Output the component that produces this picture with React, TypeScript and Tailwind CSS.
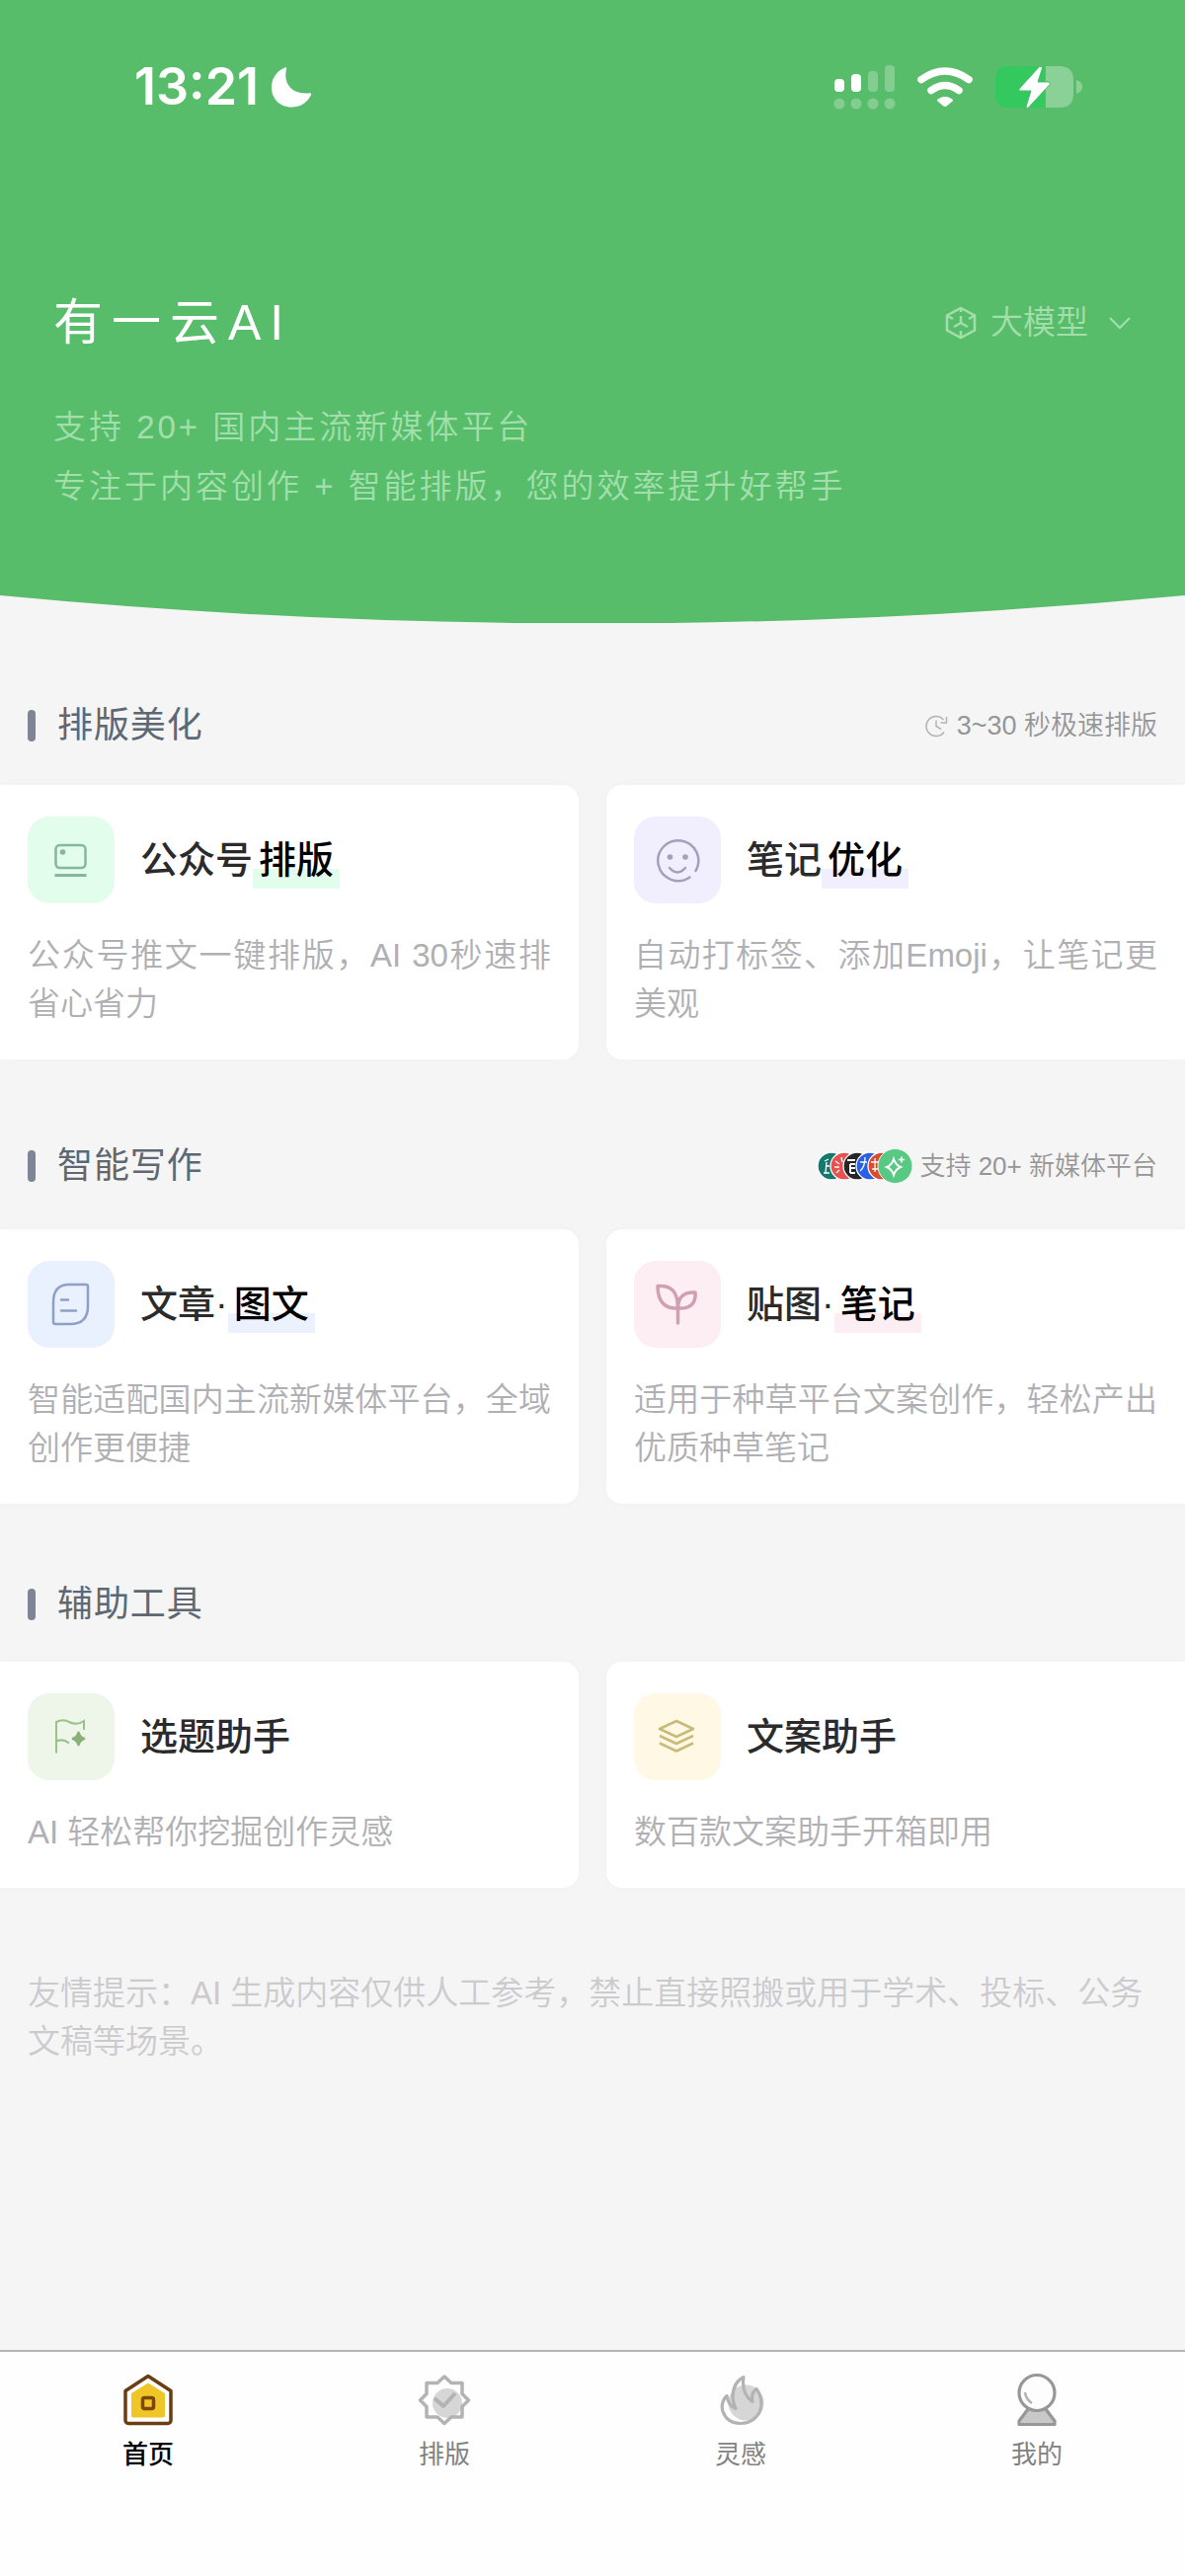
import type { ReactNode } from 'react';

interface Tool {
  title: string;
  mark?: string;
  description: string;
  tile: string;
  underline?: string;
  icon: ReactNode;
}

interface Section {
  title: string;
  headerHeight: string;
  note?: ReactNode;
  tools: Tool[];
}

const layoutIcon = (
  <svg viewBox="0 0 48 48" className="size-12" fill="none" stroke="#85b79b" strokeWidth="2.500">
    <rect x="8.500" y="9" width="30" height="23" rx="4" />
    <circle cx="15.500" cy="16" r="2.800" fill="#85b79b" stroke="none" />
    <path d="M7.500 39.500h32" strokeWidth="2.800" />
  </svg>
);

const smileIcon = (
  <svg viewBox="0 0 48 48" className="size-12" fill="none" stroke="#a79dbd" strokeWidth="2.500" strokeLinecap="round">
    <path d="M36.500 41.500A20.500 20.500 0 1 1 42.500 35" />
    <circle cx="16.500" cy="21" r="2.800" fill="#a79dbd" stroke="none" />
    <circle cx="32" cy="21" r="2.800" fill="#a79dbd" stroke="none" />
    <path d="M16 32q8 9 16 0" />
  </svg>
);

const articleIcon = (
  <svg viewBox="0 0 48 48" className="size-12" fill="none" stroke="#8fa0c8" strokeWidth="2.500" strokeLinecap="round">
    <path d="M22 4h17a2 2 0 0 1 2 2v20c0 12-6 18-18 18H8a2 2 0 0 1-2-2V22C6 10 11 4 22 4z" />
    <path d="M14 19.500h7M14 30.500h15" />
  </svg>
);

const sproutIcon = (
  <svg viewBox="0 0 48 48" className="size-12" fill="none" stroke="#d19fb2" strokeWidth="3.500" strokeLinecap="round" strokeLinejoin="round">
    <path d="M24.500 43V28" />
    <path d="M24.500 28C12 29 4 22 4 5.500c14-1 20.500 6 20.500 22.500z" />
    <path d="M24.500 28c0-11 6-17 17.500-16 1 11-5 17-17.500 16z" />
  </svg>
);

const flagIcon = (
  <svg viewBox="0 0 48 48" className="size-12" fill="none" stroke="#9cc08c" strokeWidth="2">
    <path d="M9 40.500V9q7-3.500 13 0 8 4 15-1V17M9 28.500q7-3 13 2" />
    <path d="M31.500 19q1.500 6 6.500 7-5 1-6.500 7-1.500-6-6.500-7 5-1 6.500-7z" fill="#8ab179" stroke="#8ab179" />
  </svg>
);

const layersIcon = (
  <svg viewBox="0 0 48 48" className="size-12" fill="none" stroke="#c8ba78" strokeWidth="2.500" strokeLinejoin="round">
    <path d="M23 8l17 8-17 8-17-8z" />
    <path d="M6 23l17 8 17-8M6 30.500l17 8 17-8" />
  </svg>
);

function PlatformLogos() {
  return (
    <svg viewBox="0 0 98 36" className="h-9 w-[98px]" fill="none">
      <g stroke="#ffffff" strokeWidth="1.300">
        <circle cx="15" cy="18" r="14" fill="#12796c" />
        <path d="M8 13l4-2M10 14l-1 11M7 25h6M9 18h4" />
        <circle cx="28" cy="18" r="14" fill="#e8514f" />
        <path d="M19 13l4 3M18 19h5M20 25l3-3M25 9l1 5" />
        <circle cx="41" cy="18" r="14" fill="#262626" />
        <path d="M31 12h8M34 16v9M34 16h5M34 20h5M34 25h5" strokeWidth="2" />
        <circle cx="54" cy="18" r="14" fill="#2a5fe8" />
        <path d="M44 14h7M49 9q0 10-5 14" />
        <circle cx="66" cy="18" r="14" fill="#dc4b2c" />
        <path d="M55 14h8M59 10v14M56 21h8" />
      </g>
      <circle cx="79.500" cy="18" r="17.500" fill="#57c983" stroke="#f5f5f6" strokeWidth="1" />
      <path d="M78 11q2 6 7 8-5 2-7 8-2-6-7-8 5-2 7-8z" stroke="#ffffff" strokeWidth="2" />
      <path d="M86 8.500v6M83 11.500h6" stroke="#ffffff" strokeWidth="1.500" />
    </svg>
  );
}

function SpeedNote() {
  return (
    <div className="flex items-center gap-2 text-[27px] font-[350] text-[#969696]">
      <svg viewBox="0 0 24 24" className="size-6" fill="none" stroke="#b4b4b4" strokeWidth="1.500">
        <path d="M19 18.500A10 10 0 1 1 18.500 6M21.500 3v6h-6M11 6.500v6l5 3" />
      </svg>
      <span>3~30 秒极速排版</span>
    </div>
  );
}

function PlatformNote() {
  return (
    <div className="flex items-center gap-1.5 text-[26px] font-[350] text-[#969696]">
      <PlatformLogos />
      <span>支持 20+ 新媒体平台</span>
    </div>
  );
}

const sections: Section[] = [
  {
    title: '排版美化',
    headerHeight: 'h-15',
    note: <SpeedNote />,
    tools: [
      {
        title: '公众号',
        mark: '排版',
        description: '公众号推文一键排版，AI 30秒速排省心省力',
        tile: 'bg-[#e3fdec]',
        underline: 'bg-[#e3fdec]',
        icon: layoutIcon,
      },
      {
        title: '笔记',
        mark: '优化',
        description: '自动打标签、添加Emoji，让笔记更美观',
        tile: 'bg-[#f1effe]',
        underline: 'bg-[#f1effe]',
        icon: smileIcon,
      },
    ],
  },
  {
    title: '智能写作',
    headerHeight: 'h-17',
    note: <PlatformNote />,
    tools: [
      {
        title: '文章·',
        mark: '图文',
        description: '智能适配国内主流新媒体平台，全域创作更便捷',
        tile: 'bg-[#e9f1fe]',
        underline: 'bg-[#ebf2fd]',
        icon: articleIcon,
      },
      {
        title: '贴图·',
        mark: '笔记',
        description: '适用于种草平台文案创作，轻松产出优质种草笔记',
        tile: 'bg-[#fdeef3]',
        underline: 'bg-[#fdeef3]',
        icon: sproutIcon,
      },
    ],
  },
  {
    title: '辅助工具',
    headerHeight: 'h-14',
    tools: [
      {
        title: '选题助手',
        description: 'AI 轻松帮你挖掘创作灵感',
        tile: 'bg-[#edf6e8]',
        icon: flagIcon,
      },
      {
        title: '文案助手',
        description: '数百款文案助手开箱即用',
        tile: 'bg-[#fff8e4]',
        icon: layersIcon,
      },
    ],
  },
];

const tabs = [
  {
    label: '首页',
    active: true,
    icon: (
      <svg viewBox="0 0 56 56" className="size-14" fill="none" strokeLinejoin="round">
        <path d="M28 11.500l17 10.500v22.500a2 2 0 0 1-2 2H13a2 2 0 0 1-2-2V22z" fill="#f0c526" />
        <path d="M28 4.500l23 15v30a3 3 0 0 1-3 3H8a3 3 0 0 1-3-3v-30z" stroke="#6b3d12" strokeWidth="3.500" />
        <rect x="22.500" y="26.500" width="11" height="11" rx="2" stroke="#7b4607" strokeWidth="3.500" />
      </svg>
    ),
  },
  {
    label: '排版',
    icon: (
      <svg viewBox="0 0 56 56" className="size-14" fill="none" stroke="#b3b3b3" strokeWidth="3.500" strokeLinejoin="round">
        <circle cx="31" cy="32" r="15" fill="#d6d6d6" stroke="none" />
        <path d="M28 5l7 6.500h11v11l6.500 6.500-6.500 6.500v10.500H35L28 52.500l-7-6.500H10V35.500L3.500 29l6.500-6.500v-11h11z" />
        <path d="M18 27l9 8 12-13" strokeWidth="4" />
      </svg>
    ),
  },
  {
    label: '灵感',
    icon: (
      <svg viewBox="0 0 56 56" className="size-14" fill="none" stroke="#b3b3b3" strokeWidth="3.200" strokeLinejoin="round">
        <circle cx="33.500" cy="31.500" r="18" fill="#d6d6d6" stroke="none" />
        <path d="M31 5.500c-8 4-11 12-11 21 0 3 2 8 3 11-5-2-8-7-9-13-4 4-6 9-4 16 3 8 10 12 18 12 12 0 21-9 21-20 0-7-2-11-5-15-4 3-5 8-4 13-7-5-11-12-9-25z" />
      </svg>
    ),
  },
  {
    label: '我的',
    icon: (
      <svg viewBox="0 0 56 56" className="size-14" fill="none" stroke="#979797" strokeWidth="3.200" strokeLinejoin="round">
        <path d="M19 38L10 50v3.500h36V50l-9-12z" fill="#c8c8c8" />
        <circle cx="28" cy="21.500" r="18" fill="#fdfdfd" />
        <path d="M16 21q1 7 7 11" stroke="#b3b3b3" strokeWidth="2.500" />
      </svg>
    ),
  },
];

function StatusBar() {
  return (
    <div className="flex h-44 items-center justify-between pr-[104px] pl-[136px]">
      <div className="flex items-center gap-3">
        <span className="font-[Inter,sans-serif] text-[52px] leading-none font-semibold">13:21</span>
        <svg viewBox="0 0 42 42" className="size-[42px]" fill="#ffffff">
          <path d="M14.500 1.500c1-.6 2 0 1.600 1.200C12.500 17 21 29 39.500 27.200c1.500-.2 2 .6 1.500 1.800C37.500 37 30 41.500 21 41.500 9 41.500 1 32.500 1 21.500 1 12.500 6 5 14.500 1.500z" />
        </svg>
      </div>
      <div className="flex items-center gap-5">
        <svg viewBox="0 0 64 46" className="h-[46px] w-16" fill="#ffffff">
          <rect x="1" y="15" width="10" height="13" rx="4" />
          <rect x="18" y="10" width="10" height="18" rx="4" />
          <g opacity="0.25">
            <rect x="35" y="7" width="10" height="21" rx="4" />
            <rect x="52" y="1" width="10" height="27" rx="4" />
            <circle cx="6" cy="40" r="5.500" />
            <circle cx="23" cy="40" r="5.500" />
            <circle cx="40" cy="40" r="5.500" />
            <circle cx="57" cy="40" r="5.500" />
          </g>
        </svg>
        <svg viewBox="0 0 58 42" className="h-[42px] w-[58px]" fill="none" stroke="#ffffff" strokeWidth="7.500" strokeLinecap="round">
          <path d="M5 13.500q24-17 48 0M15 24.500q14-10 28 0" />
          <path d="M21.500 33.500q7.500-5.500 15 0 1 1 0 2l-6 5q-1.500 1.200-3 0l-6-5q-1-1 0-2z" fill="#ffffff" stroke="none" />
        </svg>
        <svg viewBox="0 0 90 44" className="h-11 w-[90px]">
          <path d="M14 1h38v42H14Q2 43 2 32V12Q2 1 14 1z" fill="#34c95f" />
          <path d="M53 1h14q14 0 14 14v14q0 14-14 14H53z" fill="#ffffff" opacity="0.3" />
          <path d="M84 15q6 2 6 7t-6 7z" fill="#ffffff" opacity="0.3" />
          <path
            d="M46.500 1.500L26 24q-1 2 1 2h11l-5 16q0 2 2.500 1L57 19.500q1-2-1-2.500H45l4.500-14q0-2.500-3-1.500z"
            fill="#ffffff"
            stroke="#4cbd66"
            strokeWidth="1"
          />
        </svg>
      </div>
    </div>
  );
}

function ToolCard({ tool, side }: { tool: Tool; side: 'left' | 'right' }) {
  return (
    <a
      href="#tool"
      className={`block bg-white px-7 py-8 shadow-[0_0_12px_rgba(0,0,0,0.02)] ${side === 'left' ? 'rounded-r-2xl' : 'rounded-l-2xl'}`}
    >
      <div className="flex items-center gap-[26px]">
        <span className={`flex size-[88px] shrink-0 items-center justify-center rounded-[22px] ${tool.tile}`}>{tool.icon}</span>
        <h3 className="flex text-[38px] leading-[58px] font-medium text-[#2b2b2b]">
          {tool.title}
          {tool.mark && (
            <span className="relative px-1.5 text-black">
              <span className={`absolute inset-x-0 bottom-0 h-5 ${tool.underline}`} />
              <span className="relative">{tool.mark}</span>
            </span>
          )}
        </h3>
      </div>
      <p className="mt-7 text-justify text-[33px] leading-[49px] font-[350] text-[#b0b0b4]">{tool.description}</p>
    </a>
  );
}

export default function App() {
  return (
    <div
      lang="zh-CN"
      className="flex min-h-screen flex-col bg-[#f5f5f6] font-['Liberation_Sans','Noto_Sans_CJK_SC',sans-serif]"
    >
      <header>
        <div className="bg-[#58bd6a] pb-20 text-white">
          <StatusBar />
          <div className="flex items-center justify-between px-[54px] pt-[115px]">
            <h1 className="text-[50px] leading-[72px] font-normal tracking-[9px]">有一云AI</h1>
            <button type="button" className="flex items-center text-[33px] leading-[48px] font-[350] text-[#a2dfac]">
              <svg viewBox="0 0 32 34" className="mr-3.5 h-[34px] w-8" fill="none" stroke="currentColor" strokeWidth="2.500">
                <path d="M16 2l14 7.500v15L16 32 2 24.500v-15zM16 17v-7M16 17l-7 4M16 17l7 4M16 2v4M2 9.500l6 3.500M30 9.500L24 13M16 32v-7" />
              </svg>
              大模型
              <svg viewBox="0 0 24 16" className="ml-5 h-4 w-6" fill="none" stroke="currentColor" strokeWidth="2">
                <path d="M2 3l10 10L22 3" />
              </svg>
            </button>
          </div>
          <p className="mt-10 px-[54px] text-[33px] leading-[60px] font-[350] tracking-[3px] text-[#a2dfac]">
            支持 20+ 国内主流新媒体平台
            <br />
            专注于内容创作 + 智能排版，您的效率提升好帮手
          </p>
        </div>
        <svg viewBox="0 0 1200 28" preserveAspectRatio="none" className="block h-7 w-full">
          <path d="M0 0H1200Q600 57 0 0z" fill="#58bd6a" />
        </svg>
      </header>

      <main className="flex-1">
        {sections.map((section) => (
          <section key={section.title} className="pt-[74px]">
            <div className={`mb-[30px] flex items-center justify-between px-7 ${section.headerHeight}`}>
              <h2 className="flex items-center gap-[22px] text-4xl font-normal tracking-wide text-[#5d6872]">
                <span className="h-8 w-2 rounded-full bg-[#7f8594]" />
                {section.title}
              </h2>
              {section.note}
            </div>
            <div className="grid grid-cols-2 gap-7">
              {section.tools.map((tool, i) => (
                <ToolCard key={tool.description} tool={tool} side={i === 0 ? 'left' : 'right'} />
              ))}
            </div>
          </section>
        ))}
        <p className="px-7 pt-[82px] pb-10 text-[33px] leading-[49px] font-[350] text-[#cbcbce]">
          友情提示：AI 生成内容仅供人工参考，禁止直接照搬或用于学术、投标、公务文稿等场景。
        </p>
      </main>

      <nav className="grid h-[229px] grid-cols-4 items-start border-t-2 border-[#b5b5b7] bg-[#fefefe] pt-5">
        {tabs.map((tab) => (
          <a
            key={tab.label}
            href="#tab"
            className={`flex flex-col items-center gap-2 text-[26px] leading-10 ${tab.active ? 'font-medium text-black' : 'text-[#828282]'}`}
          >
            {tab.icon}
            {tab.label}
          </a>
        ))}
      </nav>
    </div>
  );
}
